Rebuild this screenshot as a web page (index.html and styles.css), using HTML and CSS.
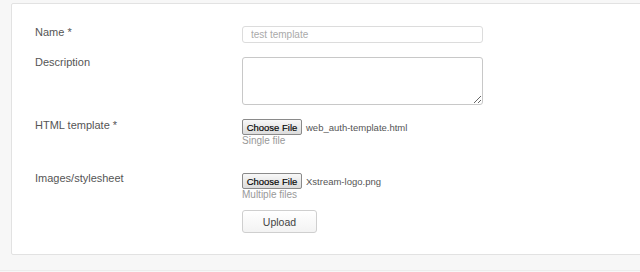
FILE: index.html
```html
<!DOCTYPE html>
<html lang="en">
<head>
  <meta charset="UTF-8">
  <title>Upload template</title>
  <link rel="stylesheet" href="styles.css">
</head>
<body>

<div class="page">
  <form class="card">
    <div class="row row-name">
      <label class="label">Name *</label>
      <div class="field">
        <input class="text" type="text" placeholder="test template">
      </div>
    </div>

    <div class="row row-desc">
      <label class="label">Description</label>
      <div class="field">
        <textarea class="area"></textarea>
      </div>
    </div>

    <div class="row row-html">
      <label class="label">HTML template *</label>
      <div class="field">
        <div class="file">
          <button type="button" class="choose">Choose File</button>
          <span class="filename">web_auth-template.html</span>
        </div>
        <div class="hint">Single file</div>
      </div>
    </div>

    <div class="row row-assets">
      <label class="label">Images/stylesheet</label>
      <div class="field">
        <div class="file">
          <button type="button" class="choose">Choose File</button>
          <span class="filename">Xstream-logo.png</span>
        </div>
        <div class="hint">Multiple files</div>
      </div>
    </div>

    <div class="row row-submit">
      <span class="label"></span>
      <div class="field">
        <button type="button" class="upload">Upload</button>
      </div>
    </div>
  </form>
  <div class="footer"></div>
</div>

</body>
</html>
```

FILE: styles.css
```css
html, body { margin: 0; overflow: hidden; }
body { background: #f7f7f7; font-family: "Liberation Sans", Arial, sans-serif; font-size: 11px; color: #555; }
.page { padding: 3px 0 0 11px; height: 269px; }
.card { background: #fff; border: 1px solid #e2e2e2; border-radius: 2px; margin-right: -20px; padding: 22px 0 21px 23px; }
.footer { border-top: 1px solid #ececec; margin: 15px -20px 0 -11px; }

.row { display: grid; grid-template-columns: 207px 241px; }
.label { line-height: 13px; }
.row-desc { margin-top: 14px; }
.row-desc .label { margin-top: -1px; }
.row-html { margin-top: 14px; }
.row-assets { margin-top: 27px; }
.row-assets .label { margin-top: -1px; }
.row-submit { margin-top: 10px; }

.text { box-sizing: border-box; width: 241px; height: 17px; margin: 0; border: 1px solid #dcdcdc; border-radius: 3px; padding: 0 8px; font: inherit; font-size: 10px; color: #555; }
.text::placeholder { color: #aaa; }
.area { box-sizing: border-box; display: block; width: 241px; height: 48px; margin: 0; border: 1px solid #c8c8c8; border-radius: 3px; resize: vertical; font: inherit; }

.file { display: flex; align-items: center; gap: 4px; height: 16px; font-size: 9.5px; }
.choose { box-sizing: border-box; width: 60px; height: 16px; margin: 0; padding: 0; font-family: "Liberation Sans", Arial, sans-serif; font-size: 9.5px; color: #000; -webkit-text-stroke: 0.15px #000; background: linear-gradient(#f8f8f8, #dcdcdc); border: 1px solid #8a8a8a; border-radius: 2px; }
.filename { color: #555; }
.hint { color: #999; font-size: 10px; line-height: 11px; margin-top: 0; }

.upload { box-sizing: border-box; width: 75px; height: 23px; margin: 0; font-family: "Liberation Sans", Arial, sans-serif; font-size: 10.5px; color: #444; background: linear-gradient(#fff, #f3f3f3); border: 1px solid #cfcfcf; border-radius: 3px; }
```
